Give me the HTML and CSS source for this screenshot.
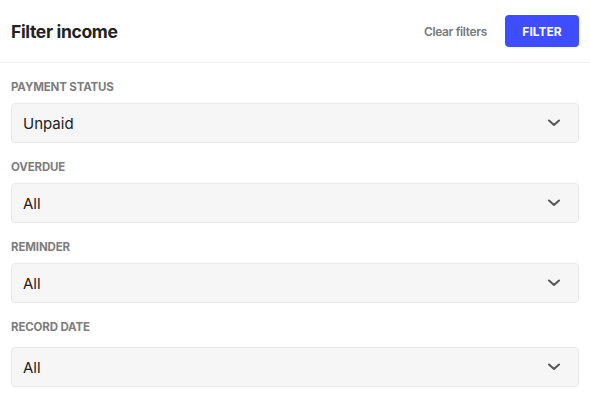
FILE: index.html
```html
<!DOCTYPE html>
<html>
<head>
<meta charset="utf-8">
<link rel="stylesheet" href="styles.css">
</head>
<body>
<div class="panel">
  <header class="header">
    <h1 class="title">Filter income</h1>
    <div class="actions">
      <button class="btn-clear">Clear filters</button>
      <button class="btn-filter">FILTER</button>
    </div>
  </header>
  <div class="fields">
    <div class="field">
      <label class="label">PAYMENT STATUS</label>
      <div class="select"><span>Unpaid</span><svg class="chev" width="12" height="8" viewBox="0 0 12 8"><path d="M1 1.5 L6 6 L11 1.5" fill="none" stroke="#555" stroke-width="2" stroke-linecap="round" stroke-linejoin="round"/></svg></div>
    </div>
    <div class="field">
      <label class="label">OVERDUE</label>
      <div class="select"><span>All</span><svg class="chev" width="12" height="8" viewBox="0 0 12 8"><path d="M1 1.5 L6 6 L11 1.5" fill="none" stroke="#555" stroke-width="2" stroke-linecap="round" stroke-linejoin="round"/></svg></div>
    </div>
    <div class="field">
      <label class="label">REMINDER</label>
      <div class="select"><span>All</span><svg class="chev" width="12" height="8" viewBox="0 0 12 8"><path d="M1 1.5 L6 6 L11 1.5" fill="none" stroke="#555" stroke-width="2" stroke-linecap="round" stroke-linejoin="round"/></svg></div>
    </div>
    <div class="field field-date">
      <label class="label">RECORD DATE</label>
      <div class="select"><span>All</span><svg class="chev" width="12" height="8" viewBox="0 0 12 8"><path d="M1 1.5 L6 6 L11 1.5" fill="none" stroke="#555" stroke-width="2" stroke-linecap="round" stroke-linejoin="round"/></svg></div>
    </div>
  </div>
</div>
</body>
</html>
```
FILE: styles.css
```css
* { box-sizing: border-box; }
html, body { margin: 0; padding: 0; background: #fff; }
body { font-family: Inter, "Noto Sans", sans-serif; color: #222; }
.panel { width: 590px; }
.header {
  height: 63px;
  border-bottom: 1px solid #eeeeee;
  display: flex;
  align-items: center;
  justify-content: space-between;
  padding: 0 11px 0 11px;
}
.title {
  margin: 0;
  font-size: 17.5px;
  font-weight: 700;
  color: #222;
  letter-spacing: -0.35px;
}
.actions { display: flex; align-items: center; gap: 18px; }
.btn-clear {
  border: 0;
  background: none;
  font-family: inherit;
  font-size: 12px;
  font-weight: 600;
  color: #7a7a7a;
  padding: 0;
  letter-spacing: -0.35px;
}
.btn-filter {
  border: 0;
  background: #3d4dff;
  color: #fff;
  font-family: inherit;
  font-size: 12px;
  font-weight: 700;
  width: 74px;
  height: 32px;
  border-radius: 4px;
  padding: 0;
}
.fields { padding: 17px 11px 0 11px; display: flex; flex-direction: column; gap: 17px; }
.field { display: flex; flex-direction: column; gap: 9px; }
.field-date { gap: 13px; }
.label {
  font-size: 11.5px;
  line-height: 14px;
  font-weight: 700;
  color: #7d7d7d;
  letter-spacing: -0.15px;
}
.select {
  height: 40px;
  background: #f6f6f6;
  border: 1px solid #e9e9e9;
  border-radius: 4px;
  display: flex;
  align-items: center;
  justify-content: space-between;
  padding: 0 18px 0 11px;
  font-size: 15px;
  color: #222;
}
.chev { display: block; }
```
